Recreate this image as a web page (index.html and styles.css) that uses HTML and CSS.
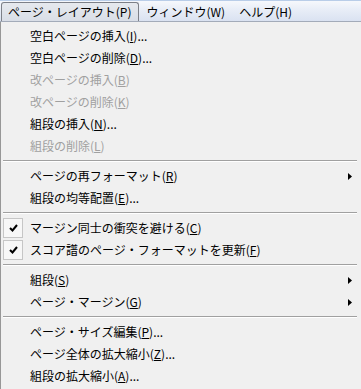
FILE: index.html
```html
<!DOCTYPE html>
<html lang="ja">
<head>
    <meta charset="UTF-8">
    <title>ページ・レイアウト</title>
    <link rel="stylesheet" href="styles.css">
</head>
<body>
    <div class="menubar">
        <div class="menubar-item open">ページ・レイアウト(P)</div>
        <div class="menubar-item">ウィンドウ(W)</div>
        <div class="menubar-item">ヘルプ(H)</div>
    </div>

    <div class="menu">
        <div class="item"><span class="gutter"></span><span class="label">空白ページの挿入(<u>I</u>)...</span></div>
        <div class="item"><span class="gutter"></span><span class="label">空白ページの削除(<u>D</u>)...</span></div>
        <div class="item disabled"><span class="gutter"></span><span class="label">改ページの挿入(<u>B</u>)</span></div>
        <div class="item disabled"><span class="gutter"></span><span class="label">改ページの削除(<u>K</u>)</span></div>
        <div class="item"><span class="gutter"></span><span class="label">組段の挿入(<u>N</u>)...</span></div>
        <div class="item disabled"><span class="gutter"></span><span class="label">組段の削除(<u>L</u>)</span></div>
        <div class="separator"></div>
        <div class="item"><span class="gutter"></span><span class="label">ページの再フォーマット(<u>R</u>)</span>
            <svg class="arrow" width="4" height="7" viewBox="0 0 4 7"><polygon points="0,0 4,3.5 0,7" fill="#000"/></svg>
        </div>
        <div class="item"><span class="gutter"></span><span class="label">組段の均等配置(<u>E</u>)...</span></div>
        <div class="separator"></div>
        <div class="item"><span class="gutter"><span class="check"><svg width="9" height="8" viewBox="0 0 9 8"><path d="M1 4 L3.5 6.5 L8 1" stroke="#000" stroke-width="2" fill="none"/></svg></span></span><span class="label">マージン同士の衝突を避ける(<u>C</u>)</span></div>
        <div class="item"><span class="gutter"><span class="check"><svg width="9" height="8" viewBox="0 0 9 8"><path d="M1 4 L3.5 6.5 L8 1" stroke="#000" stroke-width="2" fill="none"/></svg></span></span><span class="label">スコア譜のページ・フォーマットを更新(<u>F</u>)</span></div>
        <div class="separator"></div>
        <div class="item"><span class="gutter"></span><span class="label">組段(<u>S</u>)</span>
            <svg class="arrow" width="4" height="7" viewBox="0 0 4 7"><polygon points="0,0 4,3.5 0,7" fill="#000"/></svg>
        </div>
        <div class="item"><span class="gutter"></span><span class="label">ページ・マージン(<u>G</u>)</span>
            <svg class="arrow" width="4" height="7" viewBox="0 0 4 7"><polygon points="0,0 4,3.5 0,7" fill="#000"/></svg>
        </div>
        <div class="separator"></div>
        <div class="item"><span class="gutter"></span><span class="label">ページ・サイズ編集(<u>P</u>)...</span></div>
        <div class="item"><span class="gutter"></span><span class="label">ページ全体の拡大縮小(<u>Z</u>)...</span></div>
        <div class="item"><span class="gutter"></span><span class="label">組段の拡大縮小(<u>A</u>)...</span></div>
    </div>
</body>
</html>
```

FILE: styles.css
```css
html, body {
    margin: 0;
    padding: 0;
    overflow: hidden;
}

body {
    width: 361px;
    height: 389px;
    background-color: #f0f0f0;
    font-family: "Noto Sans CJK JP", "Noto Sans", sans-serif;
    font-size: 12px;
    color: #000;
}

.menubar {
    display: flex;
    align-items: stretch;
    height: 19px;
    padding-top: 1px;
    border-top: 1px solid #b9cde8;
    border-bottom: 1px solid #a3abb9;
    background: linear-gradient(#f6f8fc 0%, #e9eef7 40%, #dae2f1 100%);
}

.menubar-item {
    display: flex;
    align-items: center;
    padding: 0 0 0 8px;
    white-space: nowrap;
    line-height: 1;
}

.menubar-item.open {
    margin-left: 1px;
    padding: 0 7px 0 6px;
    border: 1px solid #7d8088;
    border-bottom: none;
    border-radius: 3px 3px 0 0;
    background: linear-gradient(#e6e9ee, #d9dee7);
}

.menubar-item:nth-child(2) {
    padding-left: 7px;
}

.menubar-item:nth-child(3) {
    padding-left: 14px;
}

.menu {
    padding: 3px 0 2px 0;
    border-left: 1px solid #979797;
    border-bottom: 1px solid #979797;
    background-color: #f0f0f0;
}

.item {
    display: flex;
    align-items: center;
    height: 22px;
    white-space: nowrap;
    line-height: 1;
}

.item.disabled {
    color: #a0a0a0;
}

.gutter {
    display: flex;
    align-items: center;
    width: 29px;
    height: 22px;
    flex-shrink: 0;
}

.check {
    display: flex;
    align-items: center;
    justify-content: center;
    width: 18px;
    height: 18px;
    margin-left: 2px;
    border: 1px solid #c6c6c6;
    background-color: #f7f7f7;
}

.label {
    flex: 1;
}

.arrow {
    margin-right: 9px;
}

.separator {
    height: 8px;
    margin: 0 4px 0 2px;
    box-sizing: border-box;
    padding-top: 3px;
}

.separator::after {
    content: "";
    display: block;
    border-top: 1px solid #a0a0a0;
    border-bottom: 1px solid #ffffff;
}
```
